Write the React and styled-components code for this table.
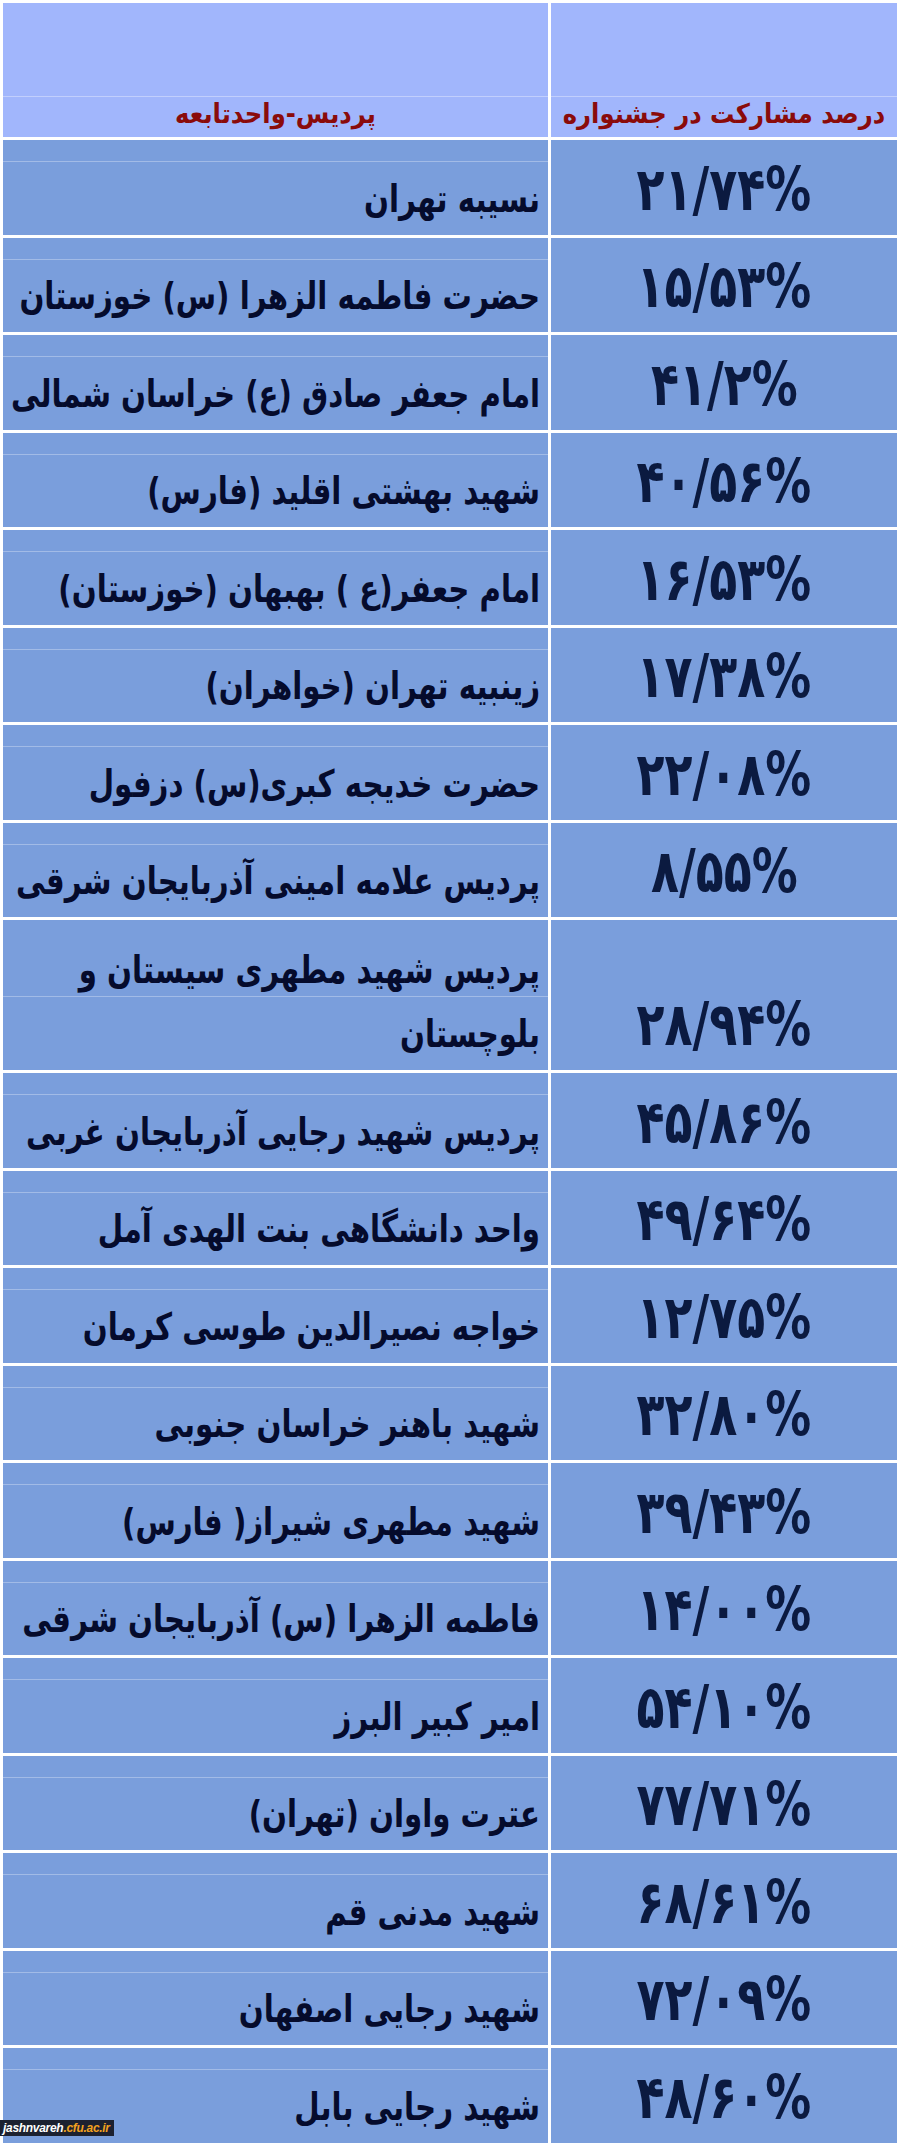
import styled, { createGlobalStyle } from 'styled-components';

const GlobalStyle = createGlobalStyle`
  html, body {
    margin: 0;
    padding: 0;
    background: #ffffff;
  }
  body {
    font-family: "DejaVu Sans", sans-serif;
  }
`;

const Page = styled.div`
  position: relative;
  width: 900px;
  height: 2146px;
  overflow: hidden;
  background: #ffffff;
`;

const Table = styled.table`
  direction: rtl;
  width: 900px;
  border-collapse: separate;
  border-spacing: 3px;
  table-layout: fixed;
`;

const HeadCell = styled.th`
  height: 128px;
  padding: 0 0 6px;
  background-color: #a1b6fc;
  background-image: linear-gradient(
    to bottom,
    transparent 93px,
    rgba(255, 255, 255, 0.35) 93px,
    rgba(255, 255, 255, 0.35) 94px,
    transparent 94px
  );
  vertical-align: bottom;
  text-align: center;
  font-family: "DejaVu Sans Condensed", "DejaVu Sans", sans-serif;
  font-weight: bold;
  font-size: 27px;
  line-height: 34px;
  color: #8a0b0b;
  width: ${p => p.$w}px;
`;

const Row = styled.tr`
  height: ${p => (p.$double ? 150 : 94.5)}px;
`;

const NameCell = styled.td`
  padding: 0 8px 4px 0;
  background-color: #7a9edc;
  background-image: linear-gradient(
    to bottom,
    transparent ${p => p.$line}px,
    rgba(255, 255, 255, 0.3) ${p => p.$line}px,
    rgba(255, 255, 255, 0.3) ${p => p.$line + 1}px,
    transparent ${p => p.$line + 1}px
  );
  vertical-align: bottom;
  text-align: right;
  white-space: nowrap;
  font-family: "DejaVu Sans Condensed", "DejaVu Sans", sans-serif;
  font-weight: bold;
  font-size: 38px;
  line-height: 64px;
  color: #050b2c;
`;

/* the source font is a narrow display face; squeeze DejaVu to match */
const NameText = styled.div`
  display: block;
  transform: scaleX(0.855);
  transform-origin: right center;
`;

const ValueCell = styled.td`
  padding: 0 0 14px;
  background-color: #7a9edc;
  vertical-align: bottom;
  text-align: center;
  font-family: "DejaVu Sans Condensed", "DejaVu Sans", sans-serif;
  font-weight: bold;
  font-size: 60px;
  line-height: 64px;
  color: #0b1a40;
`;

const Number = styled.span`
  direction: ltr;
  unicode-bidi: isolate;
  display: inline-block;
  transform: scaleX(0.85);
`;

const Badge = styled.div`
  position: absolute;
  left: 0;
  top: 2120px;
  height: 16px;
  padding: 0 4px 0 3px;
  background: #1c2130;
  display: flex;
  align-items: center;
  font-family: "Liberation Sans", Arial, sans-serif;
  font-style: italic;
  font-weight: bold;
  font-size: 12px;
  letter-spacing: -0.3px;
  color: #ffffff;
  direction: ltr;
`;

const Accent = styled.span`
  color: #f2a11f;
`;

const rows = [
  ['نسیبه تهران', '۲۱/۷۴%'],
  ['حضرت فاطمه الزهرا (س) خوزستان', '۱۵/۵۳%'],
  ['امام جعفر صادق (ع) خراسان شمالی', '۴۱/۲%'],
  ['شهید بهشتی اقلید (فارس)', '۴۰/۵۶%'],
  ['امام جعفر(ع ) بهبهان (خوزستان)', '۱۶/۵۳%'],
  ['زینبیه تهران (خواهران)', '۱۷/۳۸%'],
  ['حضرت خدیجه کبری(س) دزفول', '۲۲/۰۸%'],
  ['پردیس علامه امینی آذربایجان شرقی', '۸/۵۵%'],
  [['پردیس شهید مطهری سیستان و', 'بلوچستان'], '۲۸/۹۴%'],
  ['پردیس شهید رجایی آذربایجان غربی', '۴۵/۸۶%'],
  ['واحد دانشگاهی بنت الهدی آمل', '۴۹/۶۴%'],
  ['خواجه نصیرالدین طوسی کرمان', '۱۲/۷۵%'],
  ['شهید باهنر خراسان جنوبی', '۳۲/۸۰%'],
  ['شهید مطهری شیراز( فارس)', '۳۹/۴۳%'],
  ['فاطمه الزهرا (س) آذربایجان شرقی', '۱۴/۰۰%'],
  ['امیر کبیر البرز', '۵۴/۱۰%'],
  ['عترت واوان (تهران)', '۷۷/۷۱%'],
  ['شهید مدنی قم', '۶۸/۶۱%'],
  ['شهید رجایی اصفهان', '۷۲/۰۹%'],
  ['شهید رجایی بابل', '۴۸/۶۰%'],
];

export default function App() {
  return (
    <Page>
      <GlobalStyle />
      <Table>
        <thead>
          <tr>
            <HeadCell $w={346}>درصد مشارکت در جشنواره</HeadCell>
            <HeadCell $w={545}>پردیس-واحدتابعه</HeadCell>
          </tr>
        </thead>
        <tbody>
          {rows.map(([name, value], i) => {
            const double = Array.isArray(name);
            const lines = double ? name : [name];
            return (
              <Row key={i} $double={double}>
                <ValueCell>
                  <Number>{value}</Number>
                </ValueCell>
                <NameCell $line={double ? 76 : 21}>
                  {lines.map((part, j) => (
                    <NameText key={j}>{part}</NameText>
                  ))}
                </NameCell>
              </Row>
            );
          })}
        </tbody>
      </Table>
      <Badge>
        jashnvareh<Accent>.cfu.ac.ir</Accent>
      </Badge>
    </Page>
  );
}
